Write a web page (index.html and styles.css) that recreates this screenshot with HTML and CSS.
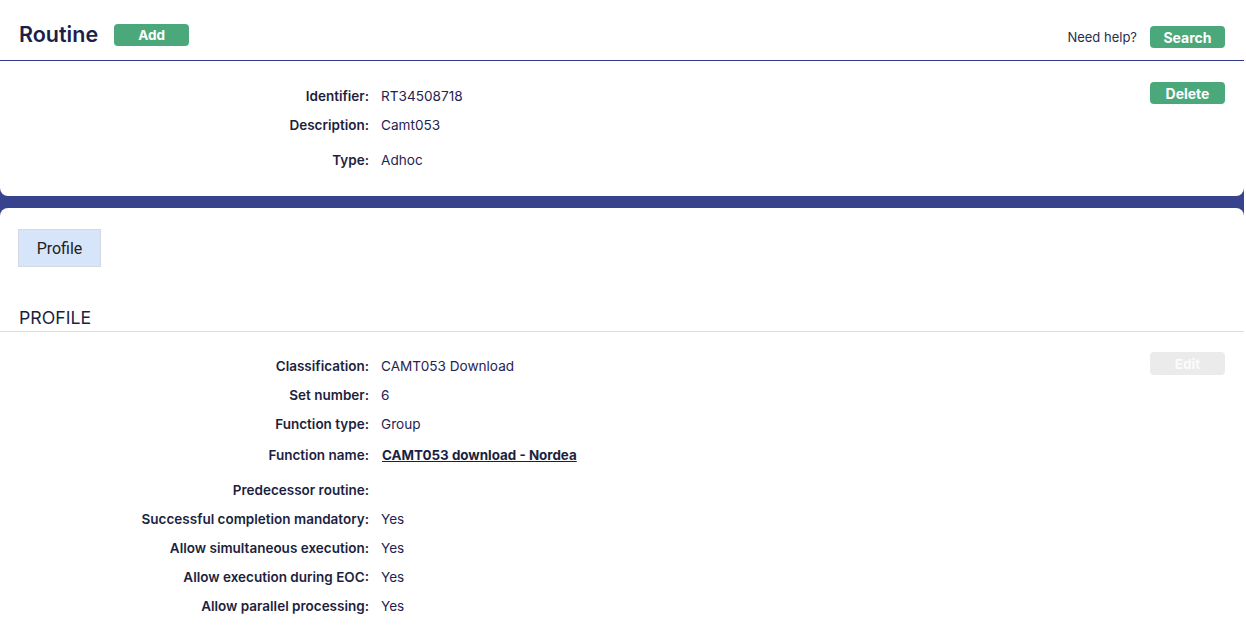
FILE: index.html
```html
<!DOCTYPE html>
<html>
<head>
<meta charset="utf-8">
<link rel="stylesheet" href="styles.css">
</head>
<body>
<div class="page">
<div class="card card-top">
  <header class="header">
    <h1 class="title">Routine</h1>
    <button class="btn btn-green btn-add">Add</button>
    <div class="spacer"></div>
    <span class="help">Need help?</span>
    <button class="btn btn-green btn-search">Search</button>
  </header>
  <section class="details">
    <div class="fields">
      <div class="row"><span class="label">Identifier:</span><span class="value">RT34508718</span></div>
      <div class="row"><span class="label">Description:</span><span class="value">Camt053</span></div>
      <div class="row row-type"><span class="label">Type:</span><span class="value">Adhoc</span></div>
    </div>
    <button class="btn btn-green btn-delete">Delete</button>
  </section>
</div>
<div class="card card-bottom">
  <div class="tabs"><div class="tab">Profile</div></div>
  <h2 class="section-title">PROFILE</h2>
  <section class="details profile">
    <div class="fields">
      <div class="row"><span class="label">Classification:</span><span class="value">CAMT053 Download</span></div>
      <div class="row"><span class="label">Set number:</span><span class="value">6</span></div>
      <div class="row"><span class="label">Function type:</span><span class="value">Group</span></div>
      <div class="row row-link"><span class="label">Function name:</span><a class="value link" href="#">CAMT053 download - Nordea</a></div>
      <div class="row row-pred"><span class="label">Predecessor routine:</span><span class="value"></span></div>
      <div class="row"><span class="label">Successful completion mandatory:</span><span class="value">Yes</span></div>
      <div class="row"><span class="label">Allow simultaneous execution:</span><span class="value">Yes</span></div>
      <div class="row"><span class="label">Allow execution during EOC:</span><span class="value">Yes</span></div>
      <div class="row"><span class="label">Allow parallel processing:</span><span class="value">Yes</span></div>
    </div>
    <button class="btn btn-disabled btn-edit">Edit</button>
  </section>
</div>
</div>
</body>
</html>
```
FILE: styles.css
```css
* { box-sizing: border-box; }
html, body { height: 100%; }
body {
  margin: 0;
  background: #fff;
  font-family: Inter, "Noto Sans", sans-serif;
  color: #1d2149;
}
.page {
  width: 1244px;
  height: 100%;
  background: #37448d;
  display: flex;
  flex-direction: column;
}
.card {
  background: #fff;
}
.card-top {
  height: 196px;
  border-radius: 0 0 8px 8px;
}
.card-bottom {
  margin-top: 12px;
  flex: 1;
  border-radius: 8px 8px 0 0;
}
.header {
  height: 61px;
  display: flex;
  align-items: center;
  padding: 8px 19px 0 19px;
  border-bottom: 1px solid #2d3a8e;
}
.title {
  margin: 0 16px 0 0;
  font-size: 21.5px;
  font-weight: 600;
  color: #1c1f4a;
}
.btn {
  font-family: Inter, sans-serif;
  border: none;
  border-radius: 4px;
  font-weight: 700;
  font-size: 13.5px;
  color: #fff;
  width: 75px;
  height: 22px;
  padding: 0;
  cursor: pointer;
}
.btn-green { background: #4aa87b; }
.btn-disabled { background: #ebebeb; color: #fbfbfb; }
.btn-add { height: 22px; margin-top: 1px; }
.spacer { flex: 1; }
.help {
  font-size: 13px;
  color: #2a2d4a;
  margin-right: 13px;
  margin-top: 6px;
}
.btn-search { margin-top: 6px; font-size: 14px; }
.btn-delete { font-size: 14px; }
.details {
  display: flex;
  align-items: flex-start;
  padding: 0 19px 0 0;
}
.card-top .details { padding-top: 21px; }
.fields { flex: 1; padding-top: 4px; }
.row {
  display: flex;
  height: 29px;
  font-size: 13.5px;
  line-height: 20px;
}
.row-type { margin-top: 6px; }
.label {
  width: 369px;
  text-align: right;
  font-weight: 600;
  color: #1c1f40;
  flex: none;
}
.value {
  margin-left: 12px;
  font-size: 13.6px;
  color: #1f2452;
}
.link {
  margin-left: 13px;
  font-size: 13.4px;
  font-weight: 700;
  color: #1c1f40;
  text-decoration: underline;
}
.row-link { height: 31px; margin-top: 2px; }
.row-pred { margin-top: 4px; }
.tabs { padding: 21px 0 0 18px; }
.tab {
  width: 83px;
  height: 38px;
  background: #d7e5fb;
  border: 1px solid #d3d9e2;
  font-family: Roboto, Inter, sans-serif;
  font-size: 16px;
  color: #222;
  display: flex;
  align-items: center;
  justify-content: center;
}
.section-title {
  margin: 41px 0 0 0;
  padding: 0 19px 3px;
  font-family: Inter, sans-serif;
  font-weight: 400;
  font-size: 17.7px;
  line-height: 20px;
  color: #1c1f40;
  border-bottom: 1px solid #dedede;
}
.profile { padding-top: 20px; }
.profile .fields { padding-top: 4px; }
.btn-edit { height: 23px; margin-top: 0; }
```
